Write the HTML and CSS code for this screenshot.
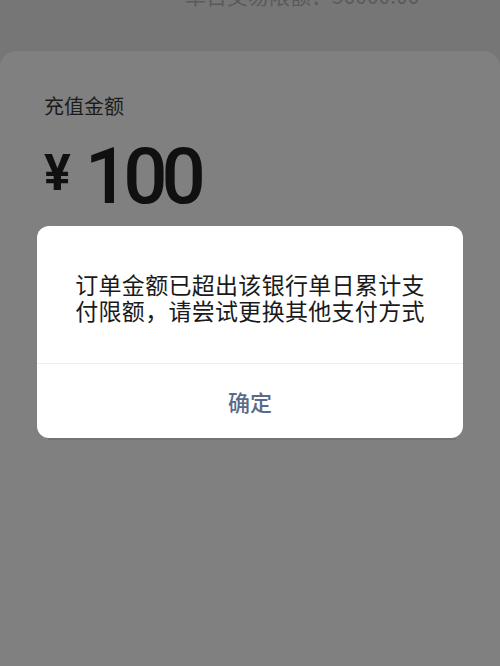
FILE: index.html
```html
<!DOCTYPE html>
<html lang="zh-CN">
<head>
<meta charset="utf-8">
<title>充值</title>
<link rel="stylesheet" href="styles.css">
</head>
<body>
<div class="page">
  <div class="top-info"><span class="limit">单日交易限额：50000.00</span></div>
  <div class="card">
    <div class="label">充值金额</div>
    <div class="amount"><span class="yen">¥</span><span class="num">100</span></div>
    <div class="rule"></div>
  </div>
  <div class="dialog">
    <div class="dialog-body">订单金额已超出该银行单日累计支付限额，请尝试更换其他支付方式</div>
    <div class="dialog-btn">确定</div>
  </div>
</div>
</body>
</html>
```
FILE: styles.css
```css
html, body {
  margin: 0;
  padding: 0;
}
body {
  width: 500px;
  height: 666px;
  overflow: hidden;
  background: #767676;
  font-family: "Noto Sans CJK SC", "Noto Sans", sans-serif;
}
.page {
  position: relative;
  width: 500px;
  height: 666px;
  display: flex;
  flex-direction: column;
}
.top-info {
  height: 51px;
  padding-left: 185px;
  box-sizing: border-box;
}
.limit {
  display: block;
  margin-top: -16px;
  font-size: 21px;
  line-height: 22px;
  color: #5a5a5a;
  white-space: nowrap;
}
.card {
  flex: 1;
  background: #808080;
  border-radius: 16px 16px 0 0;
  padding: 43px 44px 0 44px;
}
.label {
  font-size: 20px;
  line-height: 24px;
  color: #1c1c1c;
}
.amount {
  display: flex;
  align-items: flex-start;
  margin-top: 22px;
  height: 70px;
  color: #101010;
}
.yen {
  font-family: Roboto, "Noto Sans", sans-serif;
  font-weight: 700;
  font-size: 50px;
  line-height: 50px;
  margin-top: 8px;
}
.num {
  font-family: Roboto, "Noto Sans", sans-serif;
  font-weight: 500;
  font-size: 78px;
  line-height: 70px;
  letter-spacing: -6px;
  margin-left: 14px;
  margin-top: 2px;
}
.rule {
  margin-top: 227px;
  height: 3px;
  margin-left: 4px;
  background: #747474;
}
.dialog {
  position: absolute;
  top: 226px;
  left: 37px;
  width: 426px;
  height: 212px;
  background: #ffffff;
  border-radius: 12px;
  display: flex;
  flex-direction: column;
}
.dialog-body {
  padding: 45px 30px 0 30px;
  height: 138px;
  box-sizing: border-box;
  font-size: 23px;
  line-height: 26px;
  letter-spacing: 0.3px;
  color: #1a1a1a;
  text-align: center;
  border-bottom: 1px solid #efefef;
}
.dialog-btn {
  flex: 1;
  display: flex;
  align-items: center;
  justify-content: center;
  font-size: 22px;
  color: #5a6a8a;
  font-weight: 500;
}
```
